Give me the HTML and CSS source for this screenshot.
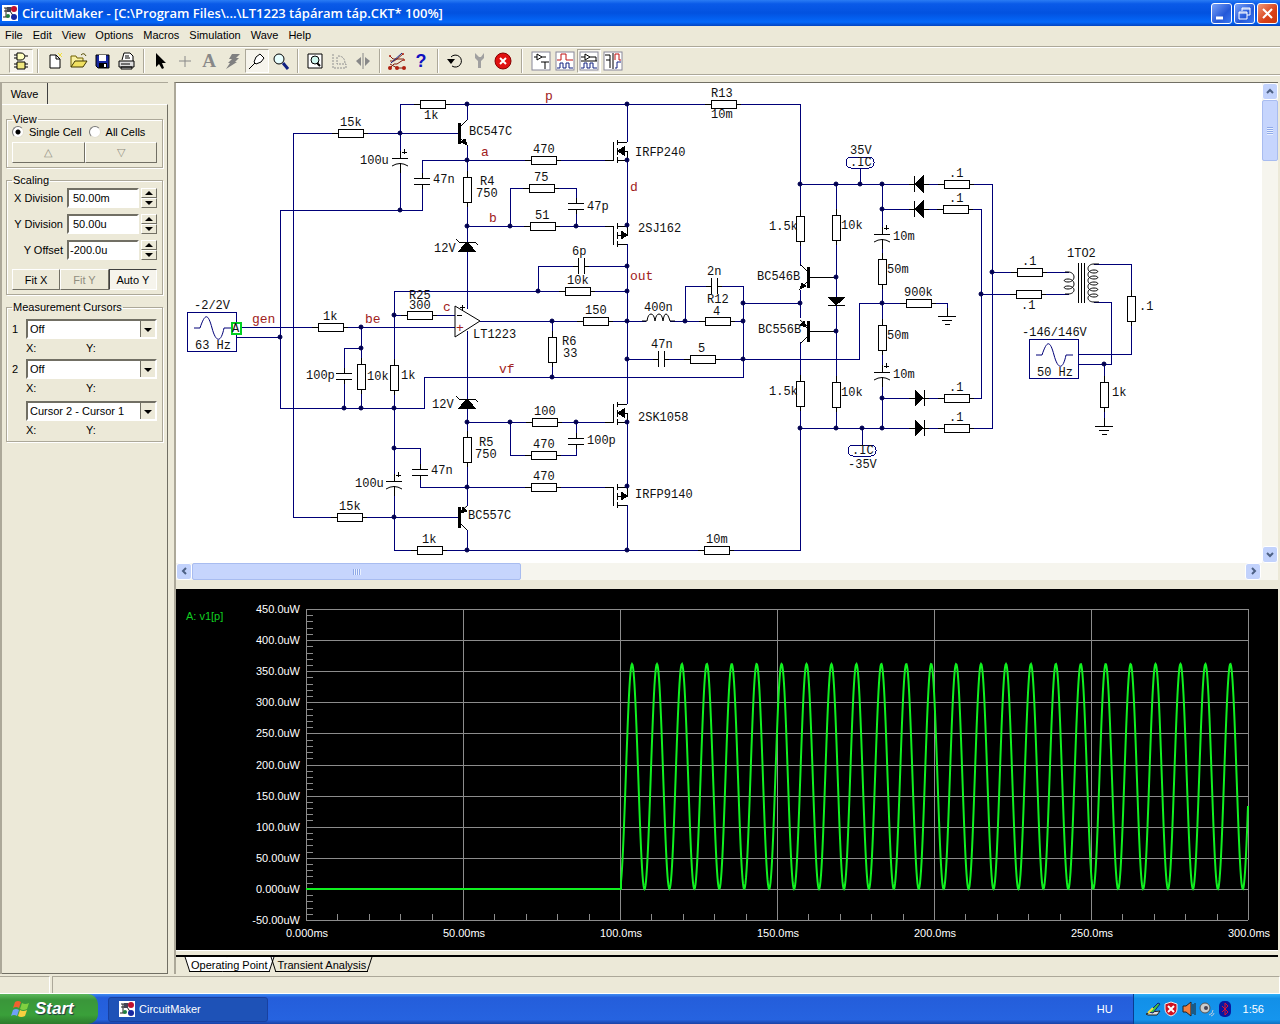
FILE: index.html
```html
<!DOCTYPE html>
<html lang="en">

<head>
    <meta charset="utf-8">
    <title>CircuitMaker</title>
    <link rel="stylesheet" href="styles.css">
    <script src="script.js" defer></script>
</head>

<body>
    <header class="titlebar">
        <svg class="app_icon" width="16" height="16" viewBox="0 0 16 16">
            <rect width="16" height="16" fill="#fff"/>
            <path d="M2 3h8M2 6h6M4 3v9M1 12h5M8 6l4 6" stroke="#222" fill="none"/>
            <rect x="5" y="2" width="4" height="5" fill="#445"/>
            <circle cx="12" cy="4" r="3" fill="#c01030"/><circle cx="12" cy="12" r="3" fill="#1828a0"/><circle cx="6" cy="11" r="2" fill="#208040"/>
        </svg>
        <h1>CircuitMaker - [C:\Program Files\...\LT1223 tápáram táp.CKT* 100%]</h1>
        <button class="win_btn" aria-label="Minimize"><svg width="19" height="19"><path d="M4 14h7" stroke="#fff" stroke-width="3"/></svg></button>
        <button class="win_btn" aria-label="Restore"><svg width="19" height="19"><path d="M7 7V4h8v7h-3M7 5h8M4 8h8v7H4zM4 9h8" stroke="#fff" fill="none"/></svg></button>
        <button class="win_btn close" aria-label="Close"><svg width="19" height="19"><path d="M5 5l9 9M14 5l-9 9" stroke="#fff" stroke-width="2"/></svg></button>
    </header>

    <nav class="menu">
        <button>File</button><button>Edit</button><button>View</button><button>Options</button><button>Macros</button><button>Simulation</button><button>Wave</button><button>Help</button>
    </nav>

    <div class="toolbar">
        <button class="tool pressed" aria-label="Parts"><svg width="20" height="20"><path d="M6 2h4c5 0 5 7 0 7H6zM3 4h3M3 7h3M14 5h3" fill="#ffffc0" stroke="#000"/><path d="M6 11h8v7H6zM3 13h3M3 16h3M14 13h3M14 16h3" fill="#f0e880" stroke="#000"/></svg></button>
        <span class="sep"></span>
        <button class="tool" aria-label="New"><svg width="20" height="20"><path d="M5 4h6l4 4v9H5z" fill="#fff" stroke="#000"/><path d="M11 4v4h4" fill="none" stroke="#000"/><path d="M13 2l4 4M17 2l-3 3" stroke="#f0e040"/></svg></button>
        <button class="tool" aria-label="Open"><svg width="20" height="20"><path d="M2 16V5h5l1 2h6v3" fill="#f8f0a0" stroke="#706000"/><path d="M2 16l4-6h12l-4 6z" fill="#f0e060" stroke="#403800"/><path d="M12 4q3-3 5 1" fill="none" stroke="#504800"/></svg></button>
        <button class="tool" aria-label="Save"><svg width="20" height="20"><path d="M3 4h13v13H5l-2-2z" fill="#1828a0" stroke="#000"/><path d="M6 4h7v6H6z" fill="#fff"/><path d="M6 12h8v5H6z" fill="#000"/><path d="M11 13h2v3h-2z" fill="#fff"/></svg></button>
        <button class="tool" aria-label="Print"><svg width="20" height="20"><path d="M5 9l2-7h6l3 3v5" fill="#fff" stroke="#000"/><path d="M8 5h4M8 7h5" stroke="#000"/><path d="M2 10h15v6H2zM4 16h11v2H4z" fill="#ddd" stroke="#000"/><path d="M4 13h9" stroke="#000"/></svg></button>
        <span class="sep"></span>
        <button class="tool" aria-label="Select"><svg width="20" height="20"><path d="M5 2v14l3-3 3 5 2-1-2-5h4z"/></svg></button>
        <button class="tool" aria-label="Wire"><svg width="20" height="20"><path d="M10 5v11M4 10h12" stroke="#888"/></svg></button>
        <button class="tool" aria-label="Text"><span class="text_tool">A</span></button>
        <button class="tool" aria-label="Delete"><svg width="20" height="20"><path d="M9 3h8l-4 4h3l-4 4h2L3 18l4-6H5l4-4H6z" fill="#808080"/></svg></button>
        <button class="tool pressed" aria-label="Probe"><svg width="20" height="20"><path d="M2 18l6-6M7 11l2-5 4-3 4 4-3 4-5 2z" fill="#fff" stroke="#000"/></svg></button>
        <button class="tool" aria-label="Zoom"><svg width="20" height="20"><circle cx="8" cy="8" r="5" fill="#e8ffff" stroke="#000"/><path d="M12 12l5 6" stroke="#102080" stroke-width="3"/></svg></button>
        <span class="sep"></span>
        <button class="tool" aria-label="Fit"><svg width="20" height="20"><path d="M3 3h14v14H3z" fill="#fff" stroke="#000"/><circle cx="10" cy="9" r="4" fill="#d0f8f0" stroke="#000"/><path d="M12 12l3 3" stroke="#000" stroke-width="2"/></svg></button>
        <button class="tool" aria-label="Rotate"><svg width="20" height="20"><path d="M4 3v14h13v-4H8V5M9 5q7 0 7 8" fill="none" stroke="#909090" stroke-dasharray="2 1"/></svg></button>
        <button class="tool" aria-label="Mirror"><svg width="20" height="20"><path d="M10 2v16" stroke="#888"/><path d="M8 6v9l-5-5zM12 6v9l5-5z" fill="#888"/></svg></button>
        <span class="sep"></span>
        <button class="tool" aria-label="Netlist"><svg width="20" height="20"><path d="M3 5l3 3h4l6-5M3 10h4l3-2h7M3 17l4-4h3l6-4M3 13l7 4h7" fill="none" stroke="#802010"/><path d="M4 12l11-10" fill="none" stroke="#102080"/><g fill="#b02010"><circle cx="3" cy="5" r="1"/><circle cx="16" cy="3" r="1"/><circle cx="17" cy="9" r="1"/><circle cx="3" cy="17" r="2"/><circle cx="10" cy="17" r="2"/><circle cx="17" cy="17" r="2"/></g></svg></button>
        <button class="tool" aria-label="Help"><span class="help_tool">?</span></button>
        <span class="sep"></span>
        <button class="tool" aria-label="Reset"><svg width="20" height="20"><path d="M6 6a6 6 0 1 1 1 9" fill="none" stroke="#000"/><path d="M2 8h8l-4 5z"/></svg></button>
        <button class="tool" aria-label="Options"><svg width="20" height="20"><path d="M6 2v5l3 3v7h3v-7l3-3V2l-3 4h-2z" fill="#a0a0a0"/></svg></button>
        <button class="tool" aria-label="Stop"><svg width="20" height="20"><circle cx="10" cy="10" r="8" fill="#e01010" stroke="#800"/><path d="M7 7l6 6M13 7l-6 6" stroke="#fff" stroke-width="2"/></svg></button>
        <span class="sep wide"></span>
        <button class="tool" aria-label="Schematic"><svg width="20" height="20"><rect x="1" y="1" width="18" height="18" fill="#fff" stroke="#889"/><path d="M3 6h3M11 6h4M6 3v6l5-3zM10 11h8M14 11v7" fill="none" stroke="#000"/></svg></button>
        <button class="tool" aria-label="Waves"><svg width="20" height="20"><rect x="1" y="1" width="18" height="18" fill="#fff" stroke="#889"/><path d="M2 9h4V3h5v6h7" fill="none" stroke="#c01010"/><path d="M2 17h3v-5h3v5h3v-5h3v5h4" fill="none" stroke="#102080"/></svg></button>
        <button class="tool pressed" aria-label="Split horizontal"><svg width="20" height="20"><rect x="1" y="1" width="18" height="18" fill="#fff" stroke="#889"/><path d="M2 6h4M6 3v6l5-3zM11 6h6v4M2 10h16" fill="none" stroke="#000"/><path d="M2 17h3v-5h3v5h3v-5h3v5h4" fill="none" stroke="#102080"/></svg></button>
        <button class="tool" aria-label="Split vertical"><svg width="20" height="20"><rect x="1" y="1" width="18" height="18" fill="#fff" stroke="#889"/><path d="M2 4h5v5H3M7 9v8M10 2v16" fill="none" stroke="#000"/><path d="M12 9V3h4v6h2" fill="none" stroke="#c01010"/><path d="M12 17h2v-6h4" fill="none" stroke="#102080"/></svg></button>
    </div>

    <div class="workspace">
        <aside class="side">
            <button class="side_tab">Wave</button>
            <form class="side_body">
                <fieldset>
                    <legend>View</legend>
                    <div class="radios">
                        <label><input type="radio" name="cell" checked>Single Cell</label>
                        <label><input type="radio" name="cell">All Cells</label>
                    </div>
                    <div class="btn_row">
                        <button type="button" disabled aria-label="Up">△</button>
                        <button type="button" disabled aria-label="Down">▽</button>
                    </div>
                </fieldset>
                <fieldset>
                    <legend>Scaling</legend>
                    <div class="field">
                        <label for="xdiv">X Division</label><input id="xdiv" value="50.00m">
                        <span class="spin"><button type="button" class="up" aria-label="X up"></button><button type="button" class="down" aria-label="X down"></button></span>
                    </div>
                    <div class="field">
                        <label for="ydiv">Y Division</label><input id="ydiv" value="50.00u">
                        <span class="spin"><button type="button" class="up" aria-label="Y up"></button><button type="button" class="down" aria-label="Y down"></button></span>
                    </div>
                    <div class="field">
                        <label for="yoff">Y Offset</label><input id="yoff" class="tight" value="-200.0u">
                        <span class="spin"><button type="button" class="up" aria-label="Offset up"></button><button type="button" class="down" aria-label="Offset down"></button></span>
                    </div>
                    <div class="btn_row">
                        <button type="button">Fit X</button>
                        <button type="button" disabled>Fit Y</button>
                        <button type="button" class="pressed">Auto Y</button>
                    </div>
                </fieldset>
                <fieldset class="cursors">
                    <legend>Measurement Cursors</legend>
                    <div class="cursor_row"><label for="c1">1</label><span class="combo"><select id="c1"><option>Off</option></select></span></div>
                    <div class="xy"><span>X:</span><span>Y:</span></div>
                    <div class="cursor_row"><label for="c2">2</label><span class="combo"><select id="c2"><option>Off</option></select></span></div>
                    <div class="xy"><span>X:</span><span>Y:</span></div>
                    <div class="cursor_row last"><label for="c3"></label><span class="combo"><select id="c3" aria-label="Difference"><option>Cursor 2 - Cursor 1</option></select></span></div>
                    <div class="xy"><span>X:</span><span>Y:</span></div>
                </fieldset>
            </form>
        </aside>

        <main class="main">
            <div class="schematic">
                <div class="canvas">
                    <svg class="circuit" width="1086" height="480" viewBox="176 83 1086 480">
                        <defs>
                            <g id="res"><path d="M-18 0H18"/><rect x="-12" y="-4" width="25" height="8" fill="#fff"/></g>
                            <g id="resv"><path d="M0 -18V18"/><rect x="-4" y="-12" width="8" height="25" fill="#fff"/></g>
                            <g id="cap"><path d="M-8 0H8"/><path class="gap" d="M-3 0H3"/><path d="M-3 -8V8M3 -8V8"/></g>
                            <g id="capv"><path d="M0 -8V8"/><path class="gap" d="M0 -3V3"/><path d="M-8 -3H8M-8 3H8"/></g>
                            <g id="capp"><path d="M0 -10V12"/><path class="gap" d="M0 -3V2"/><path d="M-8 -3H8M2 -9H7M4 -12V-7"/><path class="curve" d="M-8 5Q0 0 8 5"/></g>
                            <g id="npn"><path class="bar" d="M0 -10V11"/><path class="curve" d="M1 -6L8 -13M1 5L8 12"/><path class="solid" d="M8 12L2 9L6 6Z"/></g>
                            <g id="pnp"><path class="bar" d="M0 -10V11"/><path class="curve" d="M1 6L8 13M1 -5L8 -11"/><path class="solid" d="M2 -4L8 -6L4 -10Z"/></g>
                            <g id="nmos"><path d="M-22 9H-14V-9M-10 -11V-6M-10 -3V4M-10 6V12M-10 -9H0M-10 0H0V9H-10"/><path class="solid" d="M-9 0L-3 -4V4Z"/></g>
                            <g id="pmos"><path d="M-22 -9H-14V10M-10 -12V-6M-10 -3V4M-10 6V12M-10 9H0M-10 0H0V-9H-10"/><path class="solid" d="M0 0L-6 -4V4Z"/></g>
                            <g id="zener"><path d="M-8 -4H8"/><path class="curve" d="M-8 -4L-11 -7M8 -4L11 -1"/><path class="solid" d="M0 -4L-8 5H8Z"/></g>
                            <g id="diode"><path d="M-10 0H10M-5 -8V8"/><path class="solid" d="M-4 0L4 -8V8Z"/></g>
                            <g id="gnd"><path d="M0 -8V0M-9 0H9M-5 4H5M-2 8H3"/></g>
                            <circle id="dot" r="2"/>
                        </defs>

                        <!-- wires -->
                        <g class="wire">
                            <path d="M458 133H293V517H458M400 133V104H800V550H394V291H627"/>
                            <path d="M400 133V210M280 210H422V160H613M280 210V408H424V377H743V286H685V321"/>
                            <path d="M467 104V120M467 145V309M467 331V506M467 530V550"/>
                            <path d="M627 104V142M627 160V225M627 244V404M627 422V486M627 505V550"/>
                            <path d="M467 226H613M510 226V188H576V226M538 291V266H627M394 315H455M236 327H455M236 337H280"/>
                            <path d="M361 327V408M361 348H344V408M394 448H420V487H613M480 321H743M552 321V377"/>
                            <path d="M467 422H613M510 422V455H576V422M627 359H859V303H947V316M743 303H800"/>
                            <path d="M800 184H992V428H800M882 209H981V398H882M882 184V428M836 184V428"/>
                            <path d="M992 272H1069M981 294H1069M1094 264H1131V354H1079M1094 302H1111V364H1079"/>
                            <path d="M860 168V184M862 428V445M1104 364V418"/>
                            <path d="M187 312H236V351H187ZM1029 339H1078V378H1029Z"/>
                            <rect x="846" y="157" width="28" height="11" rx="5"/><rect x="848" y="445" width="28" height="11" rx="5"/>
                            <path class="curve" d="M194 328h6c5-15 8-15 12 0s9 15 12 0h7M1036 355h6c5-15 8-15 12 0s9 15 12 0h7"/>
                        </g>
                        <!-- the supply wire stops between the two output transistors -->
                        <path class="erase" d="M800 266V290M800 318V342"/>

                        <g class="part">
                            <use href="#res" x="432" y="104"/><use href="#res" x="350" y="133"/><use href="#res" x="723" y="104"/><use href="#res" x="543" y="160"/>
                            <use href="#res" x="541" y="188"/><use href="#res" x="542" y="226"/><use href="#res" x="577" y="291"/><use href="#res" x="419" y="315"/>
                            <use href="#res" x="330" y="327"/><use href="#res" x="595" y="321"/><use href="#res" x="717" y="321"/><use href="#res" x="702" y="359"/>
                            <use href="#res" x="544" y="422"/><use href="#res" x="543" y="455"/><use href="#res" x="543" y="487"/><use href="#res" x="349" y="517"/>
                            <use href="#res" x="429" y="550"/><use href="#res" x="716" y="550"/><use href="#res" x="956" y="184"/><use href="#res" x="955" y="209"/>
                            <use href="#res" x="918" y="303"/><use href="#res" x="956" y="398"/><use href="#res" x="956" y="428"/><use href="#res" x="1029" y="272"/><use href="#res" x="1028" y="294"/>
                            <use href="#resv" x="467" y="189"/><use href="#resv" x="467" y="449"/><use href="#resv" x="361" y="376"/><use href="#resv" x="394" y="377"/>
                            <use href="#resv" x="552" y="349"/><use href="#resv" x="800" y="228"/><use href="#resv" x="836" y="227"/><use href="#resv" x="882" y="271"/>
                            <use href="#resv" x="882" y="337"/><use href="#resv" x="800" y="393"/><use href="#resv" x="836" y="394"/><use href="#resv" x="1131" y="308"/><use href="#resv" x="1104" y="394"/>
                            <use href="#cap" x="581" y="266"/><use href="#cap" x="714" y="286"/><use href="#cap" x="661" y="359"/>
                            <use href="#capv" x="422" y="181"/><use href="#capv" x="576" y="206"/><use href="#capv" x="344" y="376"/><use href="#capv" x="420" y="472"/><use href="#capv" x="576" y="441"/>
                            <use href="#capp" x="400" y="161"/><use href="#capp" x="394" y="484"/><use href="#capp" x="882" y="237"/><use href="#capp" x="882" y="375"/>
                            <use href="#npn" x="459" y="133"/><use href="#pnp" x="459" y="517"/>
                            <use href="#npn" transform="translate(808 277) scale(-1 1)"/><use href="#pnp" transform="translate(808 331) scale(-1 1)"/>
                            <path d="M808 277H836M808 331H836"/>
                            <use href="#nmos" x="627" y="151"/><use href="#pmos" x="627" y="235"/><use href="#nmos" x="627" y="413"/><use href="#pmos" x="627" y="496"/>
                            <use href="#zener" x="467" y="246"/><use href="#zener" x="467" y="403"/>
                            <use href="#diode" x="919" y="184"/><use href="#diode" x="919" y="209"/>
                            <use href="#diode" transform="translate(919 398) scale(-1 1)"/><use href="#diode" transform="translate(919 428) scale(-1 1)"/>
                            <path d="M828 305H845"/><path class="solid" d="M828 297H845L836 305Z"/>
                            <use href="#gnd" x="947" y="316"/><use href="#gnd" x="1104" y="426"/>
                            <path class="curve opamp" d="M455 306V337L480 321Z"/><path d="M457 315H462M460 307H465M462 305V310"/>
                            <path class="gap_line" d="M646 321H670"/><path class="curve" d="M642 321h5q1-7 4-7t4 7q1-7 4-7t4 7q1-7 3-7t4 7h5"/>
                            <path d="M1078 263V303M1081 263V303M1084 263V303"/>
                            <path class="curve" d="M1065 272h3c8 0 8 10 0 10c-5 0-5-3 0-3c8 0 8 10 0 10c-5 0-5-3 0-3c8 0 8 8 0 8h-3"/>
                            <path class="curve" d="M1099 264h-5c-8 0-8 9 0 9c5 0 5-3 0-3c-8 0-8 9 0 9c5 0 5-3 0-3c-8 0-8 9 0 9c5 0 5-3 0-3c-8 0-8 9 0 9c5 0 5-3 0-3c-8 0-8 9 0 9c5 0 5-3 0-3c-8 0-8 8 0 8h5"/>
                        </g>

                        <g class="node">
                            <use href="#dot" x="467" y="104"/><use href="#dot" x="627" y="104"/><use href="#dot" x="400" y="133"/><use href="#dot" x="467" y="160"/><use href="#dot" x="400" y="210"/>
                            <use href="#dot" x="627" y="160"/><use href="#dot" x="467" y="226"/><use href="#dot" x="510" y="226"/><use href="#dot" x="576" y="226"/><use href="#dot" x="627" y="225"/>
                            <use href="#dot" x="627" y="266"/><use href="#dot" x="627" y="291"/><use href="#dot" x="538" y="291"/><use href="#dot" x="394" y="315"/><use href="#dot" x="361" y="327"/>
                            <use href="#dot" x="361" y="348"/><use href="#dot" x="280" y="337"/><use href="#dot" x="552" y="321"/><use href="#dot" x="627" y="321"/><use href="#dot" x="685" y="321"/>
                            <use href="#dot" x="743" y="321"/><use href="#dot" x="743" y="303"/><use href="#dot" x="743" y="359"/><use href="#dot" x="627" y="359"/><use href="#dot" x="552" y="377"/>
                            <use href="#dot" x="344" y="408"/><use href="#dot" x="361" y="408"/><use href="#dot" x="394" y="408"/><use href="#dot" x="394" y="448"/><use href="#dot" x="394" y="517"/>
                            <use href="#dot" x="467" y="422"/><use href="#dot" x="510" y="422"/><use href="#dot" x="576" y="422"/><use href="#dot" x="627" y="422"/><use href="#dot" x="467" y="487"/>
                            <use href="#dot" x="627" y="486"/><use href="#dot" x="467" y="550"/><use href="#dot" x="627" y="550"/><use href="#dot" x="800" y="184"/><use href="#dot" x="836" y="184"/>
                            <use href="#dot" x="860" y="184"/><use href="#dot" x="882" y="184"/><use href="#dot" x="882" y="209"/><use href="#dot" x="836" y="277"/><use href="#dot" x="800" y="303"/>
                            <use href="#dot" x="882" y="303"/><use href="#dot" x="836" y="331"/><use href="#dot" x="882" y="398"/><use href="#dot" x="800" y="428"/><use href="#dot" x="836" y="428"/>
                            <use href="#dot" x="862" y="428"/><use href="#dot" x="882" y="428"/><use href="#dot" x="992" y="272"/><use href="#dot" x="981" y="294"/><use href="#dot" x="1104" y="364"/>
                        </g>

                        <rect class="probe" x="232" y="323" width="9" height="11"/>

                        <g class="value">
                            <text x="340" y="126">15k</text><text x="424" y="119">1k</text><text x="360" y="164">100u</text><text x="433" y="183">47n</text><text x="434" y="252">12V</text>
                            <text x="194" y="309">-2/2V</text><text x="195" y="349">63 Hz</text><text x="232" y="332">A</text><text x="323" y="320">1k</text><text x="409" y="299">R25</text><text x="409" y="309">300</text>
                            <text x="306" y="379">100p</text><text x="367" y="380">10k</text><text x="401" y="379">1k</text><text x="432" y="408">12V</text><text x="431" y="474">47n</text><text x="355" y="487">100u</text>
                            <text x="339" y="510">15k</text><text x="422" y="543">1k</text><text x="469" y="135">BC547C</text><text x="533" y="153">470</text><text x="635" y="156">IRFP240</text>
                            <text x="534" y="181">75</text><text x="480" y="185">R4</text><text x="476" y="197">750</text><text x="535" y="219">51</text><text x="587" y="210">47p</text><text x="638" y="232">2SJ162</text>
                            <text x="572" y="255">6p</text><text x="567" y="284">10k</text><text x="585" y="314">150</text><text x="644" y="311">400n</text><text x="707" y="275">2n</text><text x="707" y="303">R12</text><text x="713" y="315">4</text>
                            <text x="473" y="338">LT1223</text><text x="562" y="345">R6</text><text x="563" y="357">33</text><text x="651" y="348">47n</text><text x="698" y="352">5</text><text x="534" y="415">100</text>
                            <text x="638" y="421">2SK1058</text><text x="533" y="448">470</text><text x="587" y="444">100p</text><text x="479" y="446">R5</text><text x="475" y="458">750</text><text x="533" y="480">470</text>
                            <text x="635" y="498">IRFP9140</text><text x="468" y="519">BC557C</text><text x="706" y="543">10m</text><text x="711" y="97">R13</text><text x="711" y="118">10m</text>
                            <text x="850" y="154">35V</text><text x="850" y="166">.IC</text><text x="769" y="230">1.5k</text><text x="841" y="229">10k</text><text x="949" y="177">.1</text><text x="949" y="202">.1</text>
                            <text x="893" y="240">10m</text><text x="887" y="273">50m</text><text x="904" y="296">900k</text><text x="757" y="280">BC546B</text><text x="758" y="333">BC556B</text><text x="887" y="339">50m</text>
                            <text x="893" y="378">10m</text><text x="949" y="391">.1</text><text x="949" y="421">.1</text><text x="769" y="395">1.5k</text><text x="841" y="396">10k</text><text x="852" y="454">.IC</text><text x="848" y="468">-35V</text>
                            <text x="1067" y="257">1TO2</text><text x="1022" y="265">.1</text><text x="1021" y="309">.1</text><text x="1139" y="310">.1</text><text x="1022" y="336">-146/146V</text><text x="1037" y="376">50 Hz</text><text x="1112" y="396">1k</text>
                        </g>
                        <g class="net">
                            <text x="252" y="323">gen</text><text x="365" y="323">be</text><text x="443" y="311">c</text><text x="545" y="100">p</text><text x="481" y="156">a</text><text x="489" y="222">b</text>
                            <text x="630" y="191">d</text><text x="630" y="280">out</text><text x="499" y="373">vf</text><text x="456" y="332">+</text>
                        </g>
                    </svg>
                    <div class="vscroll">
                        <button class="sb" aria-label="Scroll up"><svg width="9" height="9"><path d="M1 6l3-3 3 3" /></svg></button>
                        <span class="thumb"></span>
                        <button class="sb" aria-label="Scroll down"><svg width="9" height="9"><path d="M1 3l3 3 3-3" /></svg></button>
                    </div>
                </div>
                <div class="hscroll">
                    <button class="sb" aria-label="Scroll left"><svg width="9" height="9"><path d="M6 1l-3 3 3 3" /></svg></button>
                    <span class="thumb"></span>
                    <button class="sb" aria-label="Scroll right"><svg width="9" height="9"><path d="M3 1l3 3-3 3" /></svg></button>
                </div>
            </div>

            <div class="plot">
                <svg width="1102" height="360" viewBox="176 589 1102 360">
                    <g id="grid"></g>
                    <g id="labels"></g>
                    <path id="trace"/>
                    <text class="trace_name" x="186" y="620">A: v1[p]</text>
                </svg>
            </div>

            <div class="sheets">
                <button class="sheet active">Operating Point</button>
                <button class="sheet">Transient Analysis</button>
            </div>
        </main>
    </div>

    <div class="status"><span></span><span></span></div>

    <footer class="taskbar">
        <button class="start">
            <svg width="20" height="20" viewBox="0 0 20 20"><path d="M4 3q3-2 6 0L8 9q-3-2-6 0z" fill="#f06030"/><path d="M11 4q3 2 7 0l-2 6q-4 2-7 0z" fill="#80d040"/><path d="M2 11q3-2 6 0l-2 6q-3-2-6 0z" fill="#70a0f8"/><path d="M9 11q3 2 7 0l-2 6q-4 2-7 0z" fill="#f8d040"/></svg>
            Start
        </button>
        <button class="task">
            <svg width="16" height="16" viewBox="0 0 16 16"><rect width="16" height="16" fill="#fff"/><path d="M2 3h8M2 6h6M4 3v9M1 12h5M8 6l4 6" stroke="#222" fill="none"/><rect x="5" y="2" width="4" height="5" fill="#445"/><circle cx="12" cy="4" r="3" fill="#c01030"/><circle cx="12" cy="12" r="3" fill="#1828a0"/><circle cx="6" cy="11" r="2" fill="#208040"/></svg>
            CircuitMaker
        </button>
        <span class="lang">HU</span>
        <div class="tray">
            <svg width="16" height="16"><path d="M1 13l5-2 9-1-3 4H3z" fill="#ddd" stroke="#222"/><path d="M4 11l9-9 2 1-7 9z" fill="#40c040" stroke="#102080"/><path d="M3 12l5-5" stroke="#f0e040" stroke-width="2"/></svg>
            <svg width="16" height="16"><path d="M8 1l6 2v5q0 5-6 7q-6-2-6-7V3z" fill="#d01020" stroke="#eee"/><path d="M5 5l6 6M11 5l-6 6" stroke="#fff" stroke-width="2"/></svg>
            <svg width="16" height="16"><path d="M2 5h3l5-4v14l-5-4H2z" fill="#f08040" stroke="#222"/><path d="M12 3v10M14 2v12" stroke="#222"/></svg>
            <svg width="16" height="16"><circle cx="6" cy="7" r="5" fill="#ccc" stroke="#555"/><circle cx="7" cy="7" r="2" fill="#445"/><path d="M10 14q4-1 4-5M12 15q3-1 3-3" fill="none" stroke="#bcd"/></svg>
            <svg width="16" height="16"><rect x="2" y="0" width="12" height="16" rx="5" fill="#0818a0"/><path d="M5 5l6 6-3 3V2l3 3-6 6" fill="none" stroke="#e01030"/></svg>
            <time>1:56</time>
        </div>
    </footer>
</body>

</html>
```
FILE: styles.css
```css
* {
    box-sizing: border-box;
}

body {
    margin: 0;
    min-height: 100vh;
    display: flex;
    flex-direction: column;
    background-color: #ece9d8;
    color: #000;
    font-family: "Liberation Sans", Arial, sans-serif;
    font-size: 11px;
    overflow: hidden;
}

button,
input,
select {
    font: inherit;
    color: inherit;
    padding: 0;
    margin: 0;
}

svg {
    display: block;
    flex: none;
}

/* title and menu */
.titlebar {
    height: 26px;
    flex: none;
    display: flex;
    align-items: center;
    gap: 2px;
    padding: 0 2px;
    background: linear-gradient(#2a7cf4 0, #0a5ae8 15%, #0252e0 50%, #0468fa 85%, #0344c0 100%);
}

.titlebar h1 {
    flex: 1;
    margin: 0 0 0 2px;
    color: #fff;
    font-family: "Open Sans", sans-serif;
    font-size: 13px;
    font-weight: 600;
    white-space: nowrap;
}

.win_btn {
    width: 21px;
    height: 21px;
    border: 1px solid #fff;
    border-radius: 3px;
    background: linear-gradient(135deg, #7aa2f8, #2458d8 60%, #3a78f0);
}

.win_btn.close {
    background: linear-gradient(135deg, #f09878, #d84018 60%, #c83810);
}

.menu {
    height: 21px;
    flex: none;
    display: flex;
    border-bottom: 1px solid #aca899;
}

.menu button {
    height: 18px;
    padding: 0 5px;
    border: 0;
    background: none;
}

/* toolbar */
.toolbar {
    height: 28px;
    flex: none;
    display: flex;
    align-items: center;
    padding-left: 9px;
    border-top: 1px solid #fff;
    border-bottom: 1px solid #aca899;
}

.tool {
    width: 24px;
    height: 24px;
    display: flex;
    align-items: center;
    justify-content: center;
    border: 1px solid transparent;
    background: none;
}

.tool.pressed {
    border-color: #aca899 #fff #fff #aca899;
    background-color: #f6f4ec;
}

.text_tool {
    color: #888;
    font: bold 19px "Liberation Serif", serif;
}

.help_tool {
    color: #1010c0;
    font: bold 18px "Liberation Sans", sans-serif;
}

.sep {
    width: 2px;
    height: 24px;
    margin: 0 4px;
    border-left: 1px solid #aca899;
    border-right: 1px solid #fff;
}

.sep.wide {
    margin: 0 6px;
}

/* left panel */
.workspace {
    flex: 1;
    display: flex;
    border-top: 1px solid #fff;
}

.side {
    width: 168px;
    flex: none;
    display: flex;
    flex-direction: column;
    align-items: flex-start;
    margin: 6px 6px 2px 0;
    border-left: 2px solid #aca899;
    border-top: 1px solid #aca899;
}

.side_tab {
    width: 46px;
    height: 21px;
    border: 0;
    border-right: 1px solid #404040;
    background: none;
}

.side_body {
    flex: 1;
    align-self: stretch;
    padding: 8px 4px;
    border-top: 1px solid #fff;
    border-right: 1px solid #716f64;
    border-bottom: 1px solid #716f64;
}

fieldset {
    margin: 0 0 6px;
    padding: 0 5px 4px;
    border: 1px solid #aca899;
    box-shadow: 1px 1px 0 #fff, inset 1px 1px 0 #fff;
}

legend {
    height: 12px;
    padding: 0 1px;
    line-height: 12px;
}

.radios {
    display: flex;
    gap: 7px;
    height: 14px;
    margin-bottom: 3px;
    align-items: center;
    white-space: nowrap;
}

.radios label {
    display: flex;
    align-items: center;
    gap: 5px;
}

.radios input {
    appearance: none;
    width: 12px;
    height: 12px;
    border: 1px solid #e4e0d0;
    border-top-color: #777;
    border-left-color: #777;
    border-radius: 50%;
    background-color: #fff;
}

.radios input:checked {
    background-image: radial-gradient(#000 2px, #fff 3px);
}

.btn_row {
    display: flex;
}

.btn_row button {
    flex: 1;
    height: 21px;
    border: 1px solid;
    border-color: #fff #716f64 #716f64 #fff;
    background-color: #ece9d8;
}

.btn_row button:disabled {
    color: #908d80;
}

.btn_row .pressed {
    border-color: #404040 #fff #fff #404040;
    background-color: #f6f4ec;
}

.field {
    display: flex;
    align-items: center;
    height: 20px;
    margin-bottom: 6px;
}

legend + .field {
    margin-top: 2px;
}

.field label {
    width: 51px;
    flex: none;
    margin-right: 4px;
    text-align: right;
    white-space: nowrap;
}

.field input {
    flex: 1;
    width: 0;
    height: 20px;
    padding-left: 4px;
    border: 2px solid;
    border-color: #716f64 #fff #fff #716f64;
    background-color: #fff;
}

.field .tight {
    padding-left: 1px;
}

.spin {
    display: flex;
    flex-direction: column;
    width: 16px;
    margin-left: 2px;
}

.spin button {
    display: flex;
    align-items: center;
    justify-content: center;
    height: 10px;
    border: 1px solid;
    border-color: #fff #716f64 #716f64 #fff;
    background-color: #ece9d8;
}

.spin button::after,
.combo::after {
    content: "";
    border: 4px solid transparent;
}

.spin .up::after {
    border-top: 0;
    border-bottom-color: #000;
}

.spin .down::after {
    border-bottom: 0;
    border-top-color: #000;
}

.field + .btn_row {
    margin-top: 9px;
}

.cursor_row {
    display: flex;
    align-items: center;
    height: 20px;
}

legend + .cursor_row {
    margin-top: 6px;
}

.cursor_row label {
    width: 14px;
}

.cursor_row.last {
    margin-top: 2px;
}

.cursors {
    padding-bottom: 0;
}

.combo {
    flex: 1;
    position: relative;
}

.combo select {
    appearance: none;
    width: 100%;
    height: 20px;
    padding-left: 2px;
    border: 2px solid;
    border-color: #716f64 #fff #fff #716f64;
    border-radius: 0;
    background: linear-gradient(to left, #ece9d8 14px, #716f64 14px, #716f64 15px, #fff 15px);
}

.combo::after {
    position: absolute;
    right: 5px;
    top: 9px;
    border-bottom: 0;
    border-top-color: #000;
    pointer-events: none;
}

.xy {
    display: flex;
    height: 20px;
    padding-left: 14px;
    line-height: 19px;
}

.xy span {
    width: 60px;
}

/* right side */
.main {
    flex: 1;
    min-width: 0;
    display: flex;
    flex-direction: column;
    margin: 6px 2px 2px 0;
    border-top: 1px solid #716f64;
    border-left: 2px solid #aca899;
}

.canvas {
    display: flex;
    justify-content: space-between;
    overflow: hidden;
    background-color: #fff;
}

.circuit {
    font-family: "Liberation Mono", "Courier New", monospace;
    font-size: 12px;
    shape-rendering: crispEdges;
}

.wire,
.part {
    fill: none;
    stroke: #000078;
}

.part {
    stroke: #000;
}

.node {
    fill: #000050;
    stroke: #000050;
    shape-rendering: auto;
}

.curve {
    shape-rendering: auto;
}

.opamp {
    fill: #fff;
}

.bar {
    stroke-width: 3px;
}

.solid {
    fill: #000;
}

.gap,
.gap_line,
.erase {
    stroke: #fff;
    stroke-width: 3px;
}

.probe {
    fill: #fff;
    stroke: #00d020;
    stroke-width: 2px;
}

.value {
    fill: #101010;
}

.net {
    fill: #a02020;
    font-size: 13px;
}

.vscroll,
.hscroll {
    display: flex;
    background-color: #f6f5ee;
}

.vscroll {
    flex: 0 0 16px;
    flex-direction: column;
}

.hscroll {
    height: 17px;
    padding-right: 17px;
}

.sb {
    width: 16px;
    height: 17px;
    flex: none;
    display: flex;
    align-items: center;
    justify-content: center;
    border: 1px solid #fff;
    border-radius: 3px;
    background-color: #c2d2fc;
}

.sb path {
    fill: none;
    stroke: #4d6185;
    stroke-width: 2px;
}

.sb:last-child {
    margin-left: auto;
}

.vscroll .sb:last-child {
    margin: auto 0 0;
}

.thumb {
    border: 1px solid #a8bcf0;
    border-radius: 2px;
    background-color: #c6d5fd;
}

.vscroll .thumb {
    height: 61px;
    background: repeating-linear-gradient(#8fa9e8 0 1px, #e8f0ff 1px 2px) center / 6px 8px no-repeat #c6d5fd;
}

.hscroll .thumb {
    flex: 0 1 329px;
    background: repeating-linear-gradient(to right, #8fa9e8 0 1px, #e8f0ff 1px 2px) center / 8px 6px no-repeat #c6d5fd;
}

.plot {
    flex: 1;
    margin-top: 9px;
    overflow: hidden;
    background-color: #000;
    border-bottom: 1px solid #fff;
}

#grid {
    stroke: #8c8c8c;
    shape-rendering: crispEdges;
}

#labels {
    fill: #fff;
    font-size: 11px;
}

#trace {
    fill: none;
    stroke: #10f020;
    stroke-width: 2px;
}

.trace_name {
    fill: #10d020;
}

/* sheet tabs, slanted at both ends */
.sheets {
    display: flex;
    height: 19px;
    margin-top: 4px;
    padding-left: 10px;
    border-top: 2px solid #000;
}

.sheet {
    position: relative;
    isolation: isolate;
    height: 15px;
    padding: 0 5px;
    border: 0;
    background: none;
}

.sheet::before,
.sheet::after {
    content: "";
    position: absolute;
    z-index: -1;
    top: 0;
    bottom: 0;
    border-bottom: 1px solid #000;
}

.sheet::before {
    left: 1px;
    right: 50%;
    border-left: 1px solid #000;
    transform: skewX(18deg);
}

.sheet::after {
    left: 45%;
    right: 1px;
    border-right: 1px solid #000;
    transform: skewX(-18deg);
}

.sheet.active::before,
.sheet.active::after {
    background-color: #fff;
}

/* status line and taskbar */
.status {
    height: 18px;
    flex: none;
    display: flex;
    gap: 2px;
    border-bottom: 1px solid #fff;
}

.status span {
    width: 50px;
    border-top: 1px solid #aca899;
    border-right: 1px solid #fff;
}

.status span + span {
    flex: 1;
    border-left: 1px solid #aca899;
}

.taskbar {
    height: 30px;
    flex: none;
    display: flex;
    align-items: center;
    color: #fff;
    background: linear-gradient(#3f8cf3 0, #245edb 12%, #2663e0 85%, #1941a5 100%);
}

.start {
    width: 98px;
    height: 30px;
    display: flex;
    align-items: center;
    gap: 4px;
    padding-left: 11px;
    border: 0;
    border-radius: 0 10px 10px 0;
    background: linear-gradient(#5cb85c 0, #3a963a 20%, #3aa03a 70%, #2c7a2c 100%);
    font-size: 17px;
    font-style: italic;
    font-weight: bold;
    text-shadow: 1px 1px 1px #234;
}

.task {
    width: 160px;
    height: 25px;
    display: flex;
    align-items: center;
    gap: 4px;
    margin-left: 10px;
    padding-left: 10px;
    border: 1px solid #1840a0;
    border-radius: 3px;
    background-color: #1e52b7;
}

.lang {
    margin-left: auto;
    margin-right: 20px;
}

.tray {
    height: 30px;
    display: flex;
    align-items: center;
    gap: 2px;
    padding: 0 16px 0 11px;
    border-left: 1px solid #0a3c90;
    background: linear-gradient(#2fb0f8 0, #1290e8 15%, #1595ee 85%, #0f70c0 100%);
}

.tray time {
    margin-left: 8px;
}
```
FILE: script.js
```javascript
const NS = "http://www.w3.org/2000/svg";
const LEFT = 306, RIGHT = 1248, TOP = 609, BOTTOM = 920;

let grid = document.querySelector("#grid");
let labels = document.querySelector("#labels");

function line(x1, y1, x2, y2) {
    const el = document.createElementNS(NS, "path");
    el.setAttribute("d", `M${x1} ${y1}L${x2} ${y2}`);
    grid.appendChild(el);
}

function label(x, y, text, anchor) {
    const el = document.createElementNS(NS, "text");
    el.setAttribute("x", x);
    el.setAttribute("y", y);
    el.setAttribute("text-anchor", anchor);
    el.textContent = text;
    labels.appendChild(el);
}

// horizontal divisions, 50uW each
let yNames = ["450.0uW", "400.0uW", "350.0uW", "300.0uW", "250.0uW", "200.0uW", "150.0uW", "100.0uW", "50.00uW", "0.000uW", "-50.00uW"];
yNames.forEach((name, i) => {
    const y = Math.round(TOP + i * (BOTTOM - TOP) / 10);
    line(LEFT, y, RIGHT, y);
    label(300, y + 4, name, "end");
});

// vertical divisions, 50ms each
let xNames = ["0.000ms", "50.00ms", "100.0ms", "150.0ms", "200.0ms", "250.0ms", "300.0ms"];
xNames.forEach((name, i) => {
    const x = LEFT + i * (RIGHT - LEFT) / 6;
    line(x, TOP, x, BOTTOM);
    label(x + 1, 937, name, "middle");
});

// small ticks
for (let i = 1; i < 50; i++) {
    const y = Math.round(TOP + i * (BOTTOM - TOP) / 50);
    line(LEFT, y, LEFT + 7, y);
}
for (let i = 1; i < 30; i++) {
    const x = Math.round(LEFT + i * (RIGHT - LEFT) / 30);
    line(x, BOTTOM - 6, x, BOTTOM);
}

// v1[p]: flat for 100ms, then the rectified power wave
let d = "M306 889H621";
for (let x = 621; x <= RIGHT; x += 0.5) {
    const y = 776.5 + 112.5 * Math.cos(2 * Math.PI * (x - 644.5) / 24.93);
    d += `L${x} ${y.toFixed(1)}`;
}
document.querySelector("#trace").setAttribute("d", d);
```
